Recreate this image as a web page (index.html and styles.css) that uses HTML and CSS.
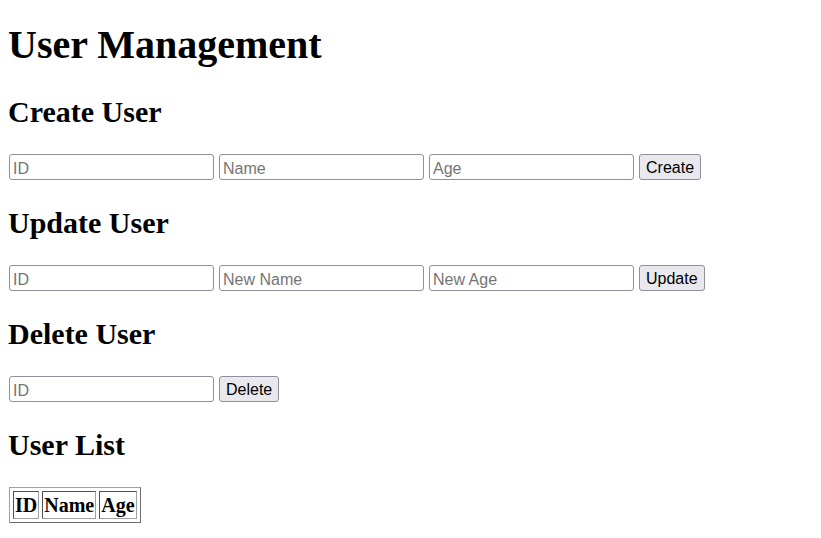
FILE: index.html
```html
<!DOCTYPE html>
<html>
<head>
<meta charset="utf-8">
<title>User Management</title>
<link rel="stylesheet" href="styles.css">
</head>
<body>
<h1>User Management</h1>
<h2>Create User</h2>
<div class="row">
  <input class="field" placeholder="ID">
  <input class="field" placeholder="Name">
  <input class="field" placeholder="Age">
  <button class="btn">Create</button>
</div>
<h2>Update User</h2>
<div class="row">
  <input class="field" placeholder="ID">
  <input class="field" placeholder="New Name">
  <input class="field" placeholder="New Age">
  <button class="btn">Update</button>
</div>
<h2>Delete User</h2>
<div class="row">
  <input class="field" placeholder="ID">
  <button class="btn">Delete</button>
</div>
<h2>User List</h2>
<table class="users">
  <thead>
    <tr><th>ID</th><th>Name</th><th>Age</th></tr>
  </thead>
  <tbody></tbody>
</table>
</body>
</html>
```

FILE: styles.css
```css
body {
  margin: 8px;
  font-family: "Liberation Serif", "Times New Roman", serif;
  color: #000;
  background: #fff;
}
h1 {
  font-size: 40px;
  margin: 13px 0 27px;
}
h2 {
  font-size: 30px;
  margin: 26px 0 25px;
}
.row {
  display: flex;
  gap: 5px;
  align-items: center;
  padding-left: 1px;
}
.field {
  box-sizing: border-box;
  width: 205px;
  height: 26px;
  margin: 0;
  padding: 3px 3px 0;
  border: 1px solid #8f8f9d;
  border-radius: 3px;
  font-family: "Liberation Sans", Arial, sans-serif;
  font-size: 16px;
  color: #000;
  background: #fff;
}
.field::placeholder {
  color: #757575;
}
.btn {
  box-sizing: border-box;
  height: 26px;
  padding: 2px 6px 0;
  border: 1px solid #8f8f9d;
  border-radius: 3px;
  background: #e9e9ed;
  font-family: "Liberation Sans", Arial, sans-serif;
  font-size: 16px;
  color: #000;
}
.users {
  border-collapse: separate;
  border-spacing: 3px;
  border-width: 1px;
  border-style: solid;
  border-color: #a0a0a0 #6e6e6e #6e6e6e #a0a0a0;
  margin-left: 1px;
}
.users th {
  border-width: 1px;
  border-style: solid;
  border-color: #505050 #a0a0a0 #a0a0a0 #505050;
  padding: 2px 1px 1px;
  font-size: 20px;
  font-weight: bold;
}
```
